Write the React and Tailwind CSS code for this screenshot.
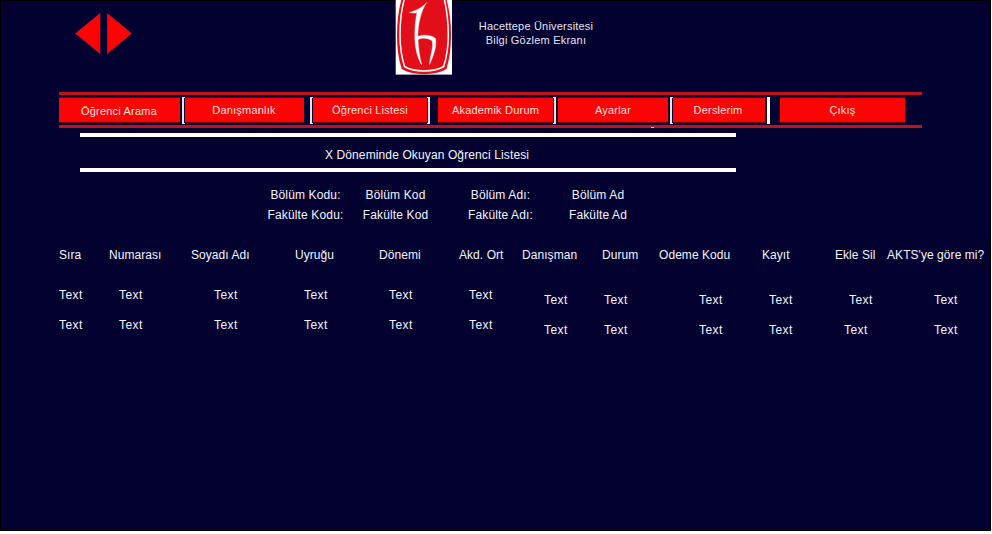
import React from "react";

const columns = [
  { title: "Sıra", col: "w-[50px]", pads: ["pl-0", "pl-0"] },
  { title: "Numarası", col: "w-[82px]", pads: ["pl-[10px]", "pl-[10px]"] },
  { title: "Soyadı Adı", col: "w-[104px]", pads: ["pl-[23px]", "pl-[23px]"] },
  { title: "Uyruğu", col: "w-[84px]", pads: ["pl-[9px]", "pl-[9px]"] },
  { title: "Dönemi", col: "w-[80px]", pads: ["pl-[10px]", "pl-[10px]"] },
  { title: "Akd. Ort", col: "w-[63px]", pads: ["pl-[10px]", "pl-[10px]"] },
  { title: "Danışman", col: "w-[80px]", low: true, pads: ["pl-[22px]", "pl-[22px]"] },
  { title: "Durum", col: "w-[57px]", low: true, pads: ["pl-[2px]", "pl-[2px]"] },
  { title: "Odeme Kodu", col: "w-[103px]", low: true, pads: ["pl-[40px]", "pl-[40px]"] },
  { title: "Kayıt", col: "w-[73px]", low: true, pads: ["pl-[7px]", "pl-[7px]"] },
  { title: "Ekle Sil", col: "w-[52px]", low: true, pads: ["pl-[14px]", "pl-[9px]"] },
  { title: "AKTS'ye göre mi?", col: "w-[100px]", low: true, pads: ["pl-[47px]", "pl-[47px]"] },
];

function NavButton({ children, className }) {
  return (
    <button
      className={`flex h-[26px] shrink-0 items-center justify-center whitespace-nowrap border-y border-[#6b0010] bg-[#fe0304] text-[11px] leading-[14px] tracking-[0.2px] text-[#ffe3df] ${className}`}
    >
      {children}
    </button>
  );
}

function Bracket({ side }) {
  return (
    <span
      className={`h-[27px] w-[3px] shrink-0 border-y border-[#f3dfe6] ${side === "left" ? "border-l-2" : "border-r-2"}`}
    />
  );
}

function Logo() {
  return (
    <svg className="h-[75px] w-[57px]" viewBox="0 0 57 75">
      <rect x="0.700" width="56.300" height="74.600" fill="#fff" />
      <path d="M6.500 -1 H51.500 C54.500 11 56 22 56 35 C56 48 54.500 59 51.500 69 C45 73 37 74 29 74 C21 74 13 73 6.700 69 C3.500 59 2 48 2 35 C2 22 3.500 11 6.500 -1Z" fill="#e20f1b" />
      <path d="M9.300 -1 C6 11 5 22 5 35 C5 47 6.500 57 9.500 66.500 C15 70 22 71 29 71 C36 71 43 70 48.700 66.500 C51.700 57 53.300 47 53.300 35 C53.300 22 52 11 49.300 -1" fill="none" stroke="#fff" strokeWidth="1.500" />
      <path d="M14.500 12.500 C21 10.500 27 8 31.700 2.500 C26 10.500 23 24 22.800 36.500 C28 34.500 36 34.500 40.500 38.500 C42 46 38.500 56 34.500 64.500 C35 56 38.500 48 37.300 41 C33 37.500 27 37.500 23 39.500 C23.300 48 24.500 56 26.800 65 C22 57 19.800 47 19.800 36 C19.800 27 20.500 19 22 12.700 C19.500 13.200 17 13 14.500 12.500Z" fill="#fff" stroke="#fff" strokeWidth=".4" />
    </svg>
  );
}

export default function App() {
  return (
    <div className="h-[534px] w-[992px] overflow-hidden bg-white font-['Liberation_Sans',Arial,sans-serif] text-xs leading-5 text-[#f4f4ff]">
      <div className="h-[531px] w-[991px] border border-black bg-[#020130]">
        <header className="flex h-[91px] items-start">
          <svg className="ml-[73px] mt-[11px] h-[44px] w-[60px] shrink-0" viewBox="0 0 60 44">
            <path d="M1.500 21.500 L26 1.500 V41.500Z M33.500 1.500 L57.500 21.500 L33.500 41.500Z" fill="#fe0304" stroke="#a82038" strokeWidth=".7" />
          </svg>
          <div className="-mt-px ml-[261px] h-[75px] w-[57px] shrink-0">
            <Logo />
          </div>
          <h1 className="ml-[25px] mt-[18px] w-[118px] whitespace-nowrap text-center text-[11px] leading-[14px] tracking-[0.2px] text-[#e4e4f4]">
            Hacettepe Üniversitesi
            <br />
            Bilgi Gözlem Ekranı
          </h1>
        </header>

        <nav className="relative ml-[58px] flex h-[36px] w-[863px] items-center border-y-[3px] border-[#bd121f]">
          <NavButton className="w-[121px] pr-px pt-px">Öğrenci Arama</NavButton>
          <span className="w-[2px]" />
          <Bracket side="left" />
          <NavButton className="w-[119px] pr-px">Danışmanlık</NavButton>
          <span className="w-[6px]" />
          <Bracket side="left" />
          <NavButton className="w-[114px]">Öğrenci Listesi</NavButton>
          <Bracket side="right" />
          <span className="w-[8px]" />
          <NavButton className="w-[115px]">Akademik Durum</NavButton>
          <Bracket side="right" />
          <span className="w-[2px]" />
          <NavButton className="w-[110px]">Ayarlar</NavButton>
          <span className="w-[2px]" />
          <Bracket side="left" />
          <NavButton className="w-[92px] pr-[2px]">Derslerim</NavButton>
          <span className="w-[2px]" />
          <span className="h-[27px] w-[3px] bg-white" />
          <span className="w-[10px]" />
          <NavButton className="w-[125px]">Çıkış</NavButton>
          <span className="absolute -bottom-[3px] left-[592px] h-px w-[3px] bg-[#e8e0d8]" />
        </nav>

        <h2 className="ml-[79px] mt-[5px] h-[39px] w-[656px] border-y-4 border-white pl-[38px] pt-[8px] text-center tracking-[0.12px]">
          X Döneminde Okuyan Oğrenci Listesi
        </h2>

        <dl className="ml-[266px] mt-[13px] grid h-[40px] w-[370px] grid-cols-[77px_103px_90px_100px] whitespace-nowrap text-center tracking-[0.14px]">
          <dt>Bölüm Kodu:</dt>
          <dd>Bölüm Kod</dd>
          <dt className="pl-[17px]">Bölüm Adı:</dt>
          <dd className="pl-[22px]">Bölüm Ad</dd>
          <dt>Fakülte Kodu:</dt>
          <dd>Fakülte Kod</dd>
          <dt className="pl-[17px]">Fakülte Adı:</dt>
          <dd className="pl-[22px]">Fakülte Ad</dd>
        </dl>

        <section className="ml-[58px] mt-[20px] flex whitespace-nowrap tracking-[0.06px]">
          {columns.map((c) => (
            <div key={c.title} className={`flex shrink-0 flex-col ${c.col}`}>
              <div className="h-5">{c.title}</div>
              <div
                className={`flex flex-col gap-[10px] tracking-[0.45px] ${c.low ? "pt-[25px]" : "pt-[20px]"}`}
              >
                {c.pads.map((p, i) => (
                  <span key={i} className={p}>
                    Text
                  </span>
                ))}
              </div>
            </div>
          ))}
        </section>
      </div>
    </div>
  );
}
